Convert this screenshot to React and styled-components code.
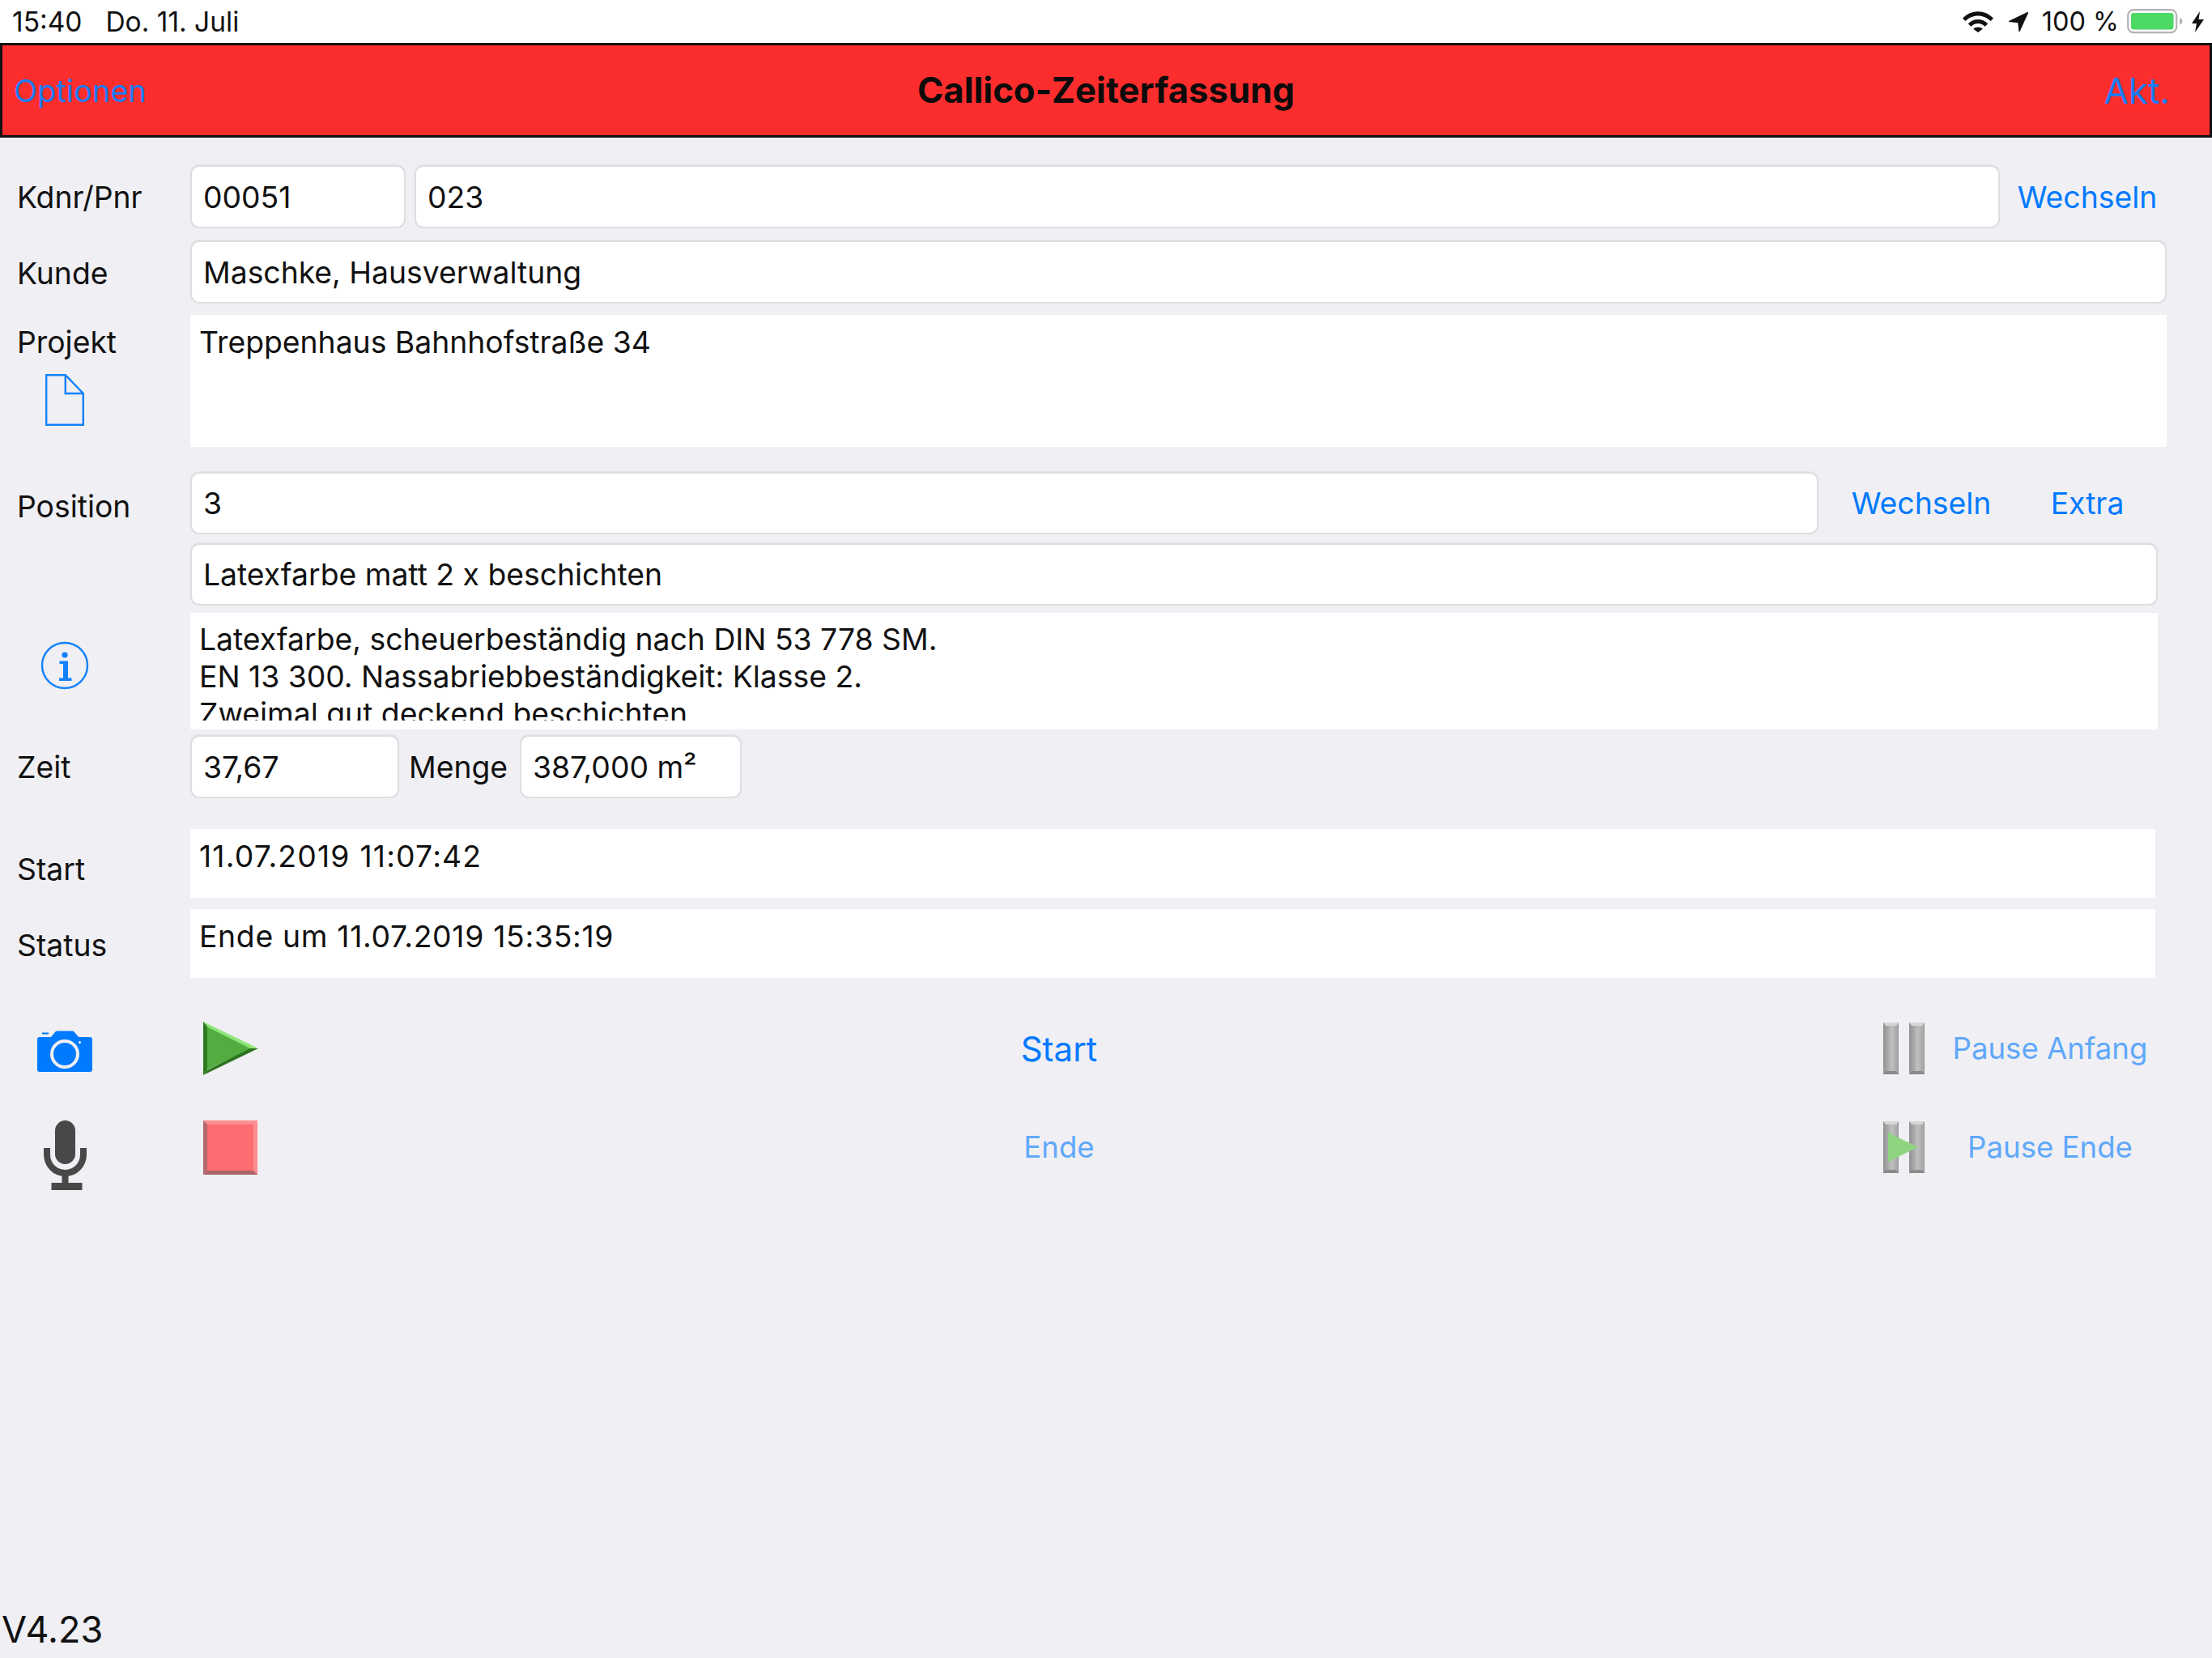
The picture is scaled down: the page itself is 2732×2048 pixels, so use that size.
import React from 'react';
import styled, { createGlobalStyle } from 'styled-components';

const GlobalStyle = createGlobalStyle`
  html, body {
    margin: 0;
    padding: 0;
    background: #efeff4;
  }
  * {
    box-sizing: border-box;
  }
`;

const Page = styled.div`
  width: 2732px;
  height: 2048px;
  display: flex;
  flex-direction: column;
  overflow: hidden;
  background: #efeff4;
  color: #111;
  font-family: Inter, "Liberation Sans", sans-serif;
  font-size: 37.3px;
`;

const StatusBar = styled.div`
  height: 53px;
  flex: none;
  background: #fff;
  display: flex;
  align-items: center;
  justify-content: space-between;
  padding: 0 10px 0 15px;
  font-size: 33.5px;
`;

const StatusGroup = styled.div`
  display: flex;
  align-items: center;
`;

const StatusItem = styled.div`
  display: flex;
  margin-left: ${(p) => p.$left || 0}px;
  font-size: ${(p) => (p.$size ? `${p.$size}px` : 'inherit')};
`;

const NavBar = styled.div`
  height: 117px;
  flex: none;
  background: #fc2d2d;
  border: 3px solid #111;
  display: grid;
  grid-template-columns: 1fr auto 1fr;
  align-items: center;
`;

const NavTitle = styled.div`
  font-size: 43.7px;
  font-weight: 700;
  color: #0b0b0b;
`;

const NavLink = styled.div`
  font-size: ${(p) => p.$size}px;
  color: #1a7cf7;
  text-align: ${(p) => p.$align || 'left'};
  padding: ${(p) => (p.$align === 'right' ? '0 49px 0 0' : '0 0 0 14px')};
`;

const Content = styled.div`
  flex: 1;
  display: flex;
  flex-direction: column;
  padding-top: 34px;
`;

const FormRow = styled.div`
  display: flex;
  align-items: ${(p) => p.$align || 'center'};
  height: ${(p) => p.$height || 78}px;
  margin-top: ${(p) => p.$top || 0}px;
`;

const Label = styled.div`
  width: 235px;
  flex: none;
  padding-left: 21px;
  padding-top: ${(p) => p.$shift || 0}px;
`;

const Field = styled.div`
  height: 100%;
  display: flex;
  align-items: center;
  flex: none;
  width: ${(p) => p.$width}px;
  margin-left: ${(p) => p.$left || 0}px;
  padding-left: 14px;
  background: #fff;
  border: 2px solid #dedee2;
  border-radius: 11px;
  box-shadow: 0 -1px 1px rgba(0, 0, 0, 0.05);
`;

const TextBox = styled.div`
  height: ${(p) => p.$height}px;
  width: ${(p) => p.$width}px;
  flex: none;
  padding: ${(p) => p.$pad ?? 11}px 0 0 11px;
  background: #fff;
  line-height: 46px;
  letter-spacing: ${(p) => p.$tracking || 0}px;
`;

const ClippedText = styled.div`
  height: ${(p) => p.$height}px;
  overflow: hidden;
`;

const SideColumn = styled.div`
  width: 235px;
  flex: none;
  display: flex;
  flex-direction: column;
  align-items: flex-start;
  height: 100%;
`;

const SideIcon = styled.div`
  width: 160px;
  display: flex;
  justify-content: center;
  margin-top: ${(p) => p.$top || 0}px;
`;

const LinkButton = styled.div`
  color: #007aff;
  width: ${(p) => p.$width}px;
  margin-left: ${(p) => p.$left || 0}px;
  flex: none;
  text-align: center;
`;

const Inline = styled.div`
  width: ${(p) => p.$width}px;
  margin-left: ${(p) => p.$left || 0}px;
  flex: none;
`;

const ActionRow = styled.div`
  display: grid;
  grid-template-columns: 160px 91px 68px 1978px 80px 310px;
  grid-template-rows: 70px;
  align-items: center;
  margin-top: ${(p) => p.$top}px;
`;

const IconCell = styled.div`
  display: flex;
  justify-content: center;
  align-self: start;
  margin-top: ${(p) => p.$top || 0}px;
`;

const GlossCell = styled.div`
  display: flex;
  justify-content: ${(p) => p.$justify || 'flex-start'};
`;

const ActionText = styled.div`
  text-align: center;
  color: #007aff;
  font-size: ${(p) => p.$size || 36.6}px;
  opacity: ${(p) => (p.$dim ? 0.6 : 1)};
`;

const Version = styled.div`
  margin-top: auto;
  padding: 0 0 7px 2px;
  font-size: 45px;
  line-height: 56px;
`;

const WifiIcon = () => (
  <svg width="38" height="26" viewBox="0 0 38 26">
    <path d="M0 8.5C10.5-2.6 27.5-2.6 38 8.5l-3.4 3.6C26 3.2 12 3.2 3.4 12.1z" fill="#111" />
    <path d="M6.8 15.3c6.9-7.2 17.5-7.2 24.4 0l-3.4 3.5c-5-5.1-12.6-5.1-17.6 0z" fill="#111" />
    <path d="M13.2 21.8c3.3-3.2 8.3-3.2 11.6 0L19 26z" fill="#111" />
  </svg>
);

const ArrowIcon = () => (
  <svg width="24" height="24" viewBox="0 0 24 24">
    <path d="M24 0L0 11.5l11.7 1.200L13 24z" fill="#111" stroke="#111" strokeWidth="1" strokeLinejoin="round" />
  </svg>
);

const BatteryIcon = () => (
  <svg width="69" height="32" viewBox="0 0 69 32">
    <rect x="1.200" y="1.200" width="60" height="28" rx="7" fill="#fff" stroke="#b4b4b4" strokeWidth="2.200" />
    <rect x="5" y="5" width="52.500" height="20.500" rx="3" fill="#4cd964" />
    <path d="M65 11c2.500.6 3.400 2.200 3.400 4.200s-.9 3.600-3.400 4.200z" fill="#b4b4b4" />
  </svg>
);

const BoltIcon = () => (
  <svg width="15" height="26" viewBox="0 0 15 26">
    <path d="M10 0L0 15h6L4 26l11-16H8.500z" fill="#111" />
  </svg>
);

const DocumentIcon = () => (
  <svg width="48" height="64" viewBox="0 0 48 64" fill="none" stroke="#1482fa" strokeWidth="2.400">
    <path d="M1.200 1.200h23.600L46.800 24v38.800H1.200z" />
    <path d="M24.800 1.200V24h22" />
  </svg>
);

const InfoIcon = () => (
  <svg width="60" height="60" viewBox="0 0 60 60">
    <circle cx="30" cy="30" r="28" fill="none" stroke="#1482fa" strokeWidth="2.400" />
    <circle cx="30" cy="17" r="3.600" fill="#1482fa" />
    <path d="M23.500 24.500h10.500v21h4.500v3.500h-15.500v-3.500h5v-17.500h-4.500z" fill="#1482fa" />
  </svg>
);

const CameraIcon = () => (
  <svg width="68" height="52" viewBox="0 0 68 52">
    <path
      fillRule="evenodd"
      fill="#007aff"
      d="M6 2.500h8v2h-8zM3 8h14l5-6c.8-1 2-1.500 3-1.500h18c1.300 0 2.300.5 3 1.500l5 6h14c2 0 3 1 3 3v37c0 2-1 3-3 3H3c-2 0-3-1-3-3V11c0-2 1-3 3-3zM34 11a18 18 0 1 0 0 36 18 18 0 0 0 0-36zM34 15a14 14 0 1 1 0 28 14 14 0 0 1 0-28zM52.500 13a1.600 1.600 0 1 0 0 3.200 1.600 1.600 0 0 0 0-3.200z"
    />
  </svg>
);

const MicIcon = () => (
  <svg width="53" height="86" viewBox="0 0 53 86">
    <rect x="14" y="0" width="25" height="54" rx="12.500" fill="#484848" />
    <path
      fill="none"
      stroke="#484848"
      strokeWidth="8"
      d="M4 34v8c0 13 10 23 22.500 23S49 55 49 42v-8"
    />
    <path d="M22.500 64h8v13h17v9H9.500v-9h13z" fill="#484848" />
  </svg>
);

const PlayIcon = () => (
  <svg width="68" height="66" viewBox="0 0 68 66">
    <path d="M0 0l68 33H0z" fill="#8fe678" />
    <path d="M0 0l5 6v54l-5 6z" fill="#2f7a20" />
    <path d="M0 66l68-33-12 0L5 60z" fill="#2d7420" />
    <path d="M5 6.500L58 33 5 59.500z" fill="#52ac40" />
  </svg>
);

const StopIcon = () => (
  <svg width="67" height="67" viewBox="0 0 67 67">
    <rect width="67" height="67" fill="#fd8e90" />
    <path d="M0 0l5 5v57l-5 5z" fill="#b4686b" />
    <path d="M0 67l5-5h57l5 5z" fill="#a86366" />
    <rect x="5" y="5" width="57" height="57" fill="#fc6c71" />
  </svg>
);

const PauseIcon = ({ withPlay }) => {
  const gradient = withPlay ? 'barB' : 'barA';
  return (
    <svg width="51" height="64" viewBox="0 0 51 64">
      <defs>
        <linearGradient id={gradient} x1="0" x2="1" y1="0" y2="0">
          <stop offset="0" stopColor="#8f8f8f" />
          <stop offset="0.55" stopColor="#c0c0c0" />
          <stop offset="1" stopColor="#a0a0a0" />
        </linearGradient>
      </defs>
      <rect width="19" height="64" fill={`url(#${gradient})`} />
      <rect x="32" width="19" height="64" fill={`url(#${gradient})`} />
      <path d="M0 0h19l-3 4H3zM32 0h19l-3 4H35z" fill="#d6d6d6" />
      <path d="M0 64h19l-3-4H3zM32 64h19l-3-4H35z" fill="#8a8a8a" />
      {withPlay && <path d="M6 14l37 18-37 18z" fill="#8fd581" />}
    </svg>
  );
};

const App = () => {
  return (
    <Page>
      <GlobalStyle />
      <StatusBar>
        <StatusGroup>
          <StatusItem>15:40</StatusItem>
          <StatusItem $left={29}>Do. 11. Juli</StatusItem>
        </StatusGroup>
        <StatusGroup>
          <WifiIcon />
          <StatusItem $left={19}><ArrowIcon /></StatusItem>
          <StatusItem $left={17} $size={32.5}>100 %</StatusItem>
          <StatusItem $left={10}><BatteryIcon /></StatusItem>
          <StatusItem $left={11}><BoltIcon /></StatusItem>
        </StatusGroup>
      </StatusBar>
      <NavBar>
        <NavLink $size={38}>Optionen</NavLink>
        <NavTitle>Callico-Zeiterfassung</NavTitle>
        <NavLink $size={44} $align="right">Akt.</NavLink>
      </NavBar>
      <Content>
        <FormRow>
          <Label>Kdnr/Pnr</Label>
          <Field $width={266}>00051</Field>
          <Field $width={1958} $left={11}>023</Field>
          <LinkButton $width={220} $left={-2}>Wechseln</LinkButton>
        </FormRow>
        <FormRow $top={15}>
          <Label $shift={3}>Kunde</Label>
          <Field $width={2441}>Maschke, Hausverwaltung</Field>
        </FormRow>
        <FormRow $top={14} $height={163} $align="flex-start">
          <SideColumn>
            <Label $shift={11}>Projekt</Label>
            <SideIcon $top={17}><DocumentIcon /></SideIcon>
          </SideColumn>
          <TextBox $width={2441} $height={163}>Treppenhaus Bahnhofstraße 34</TextBox>
        </FormRow>
        <FormRow $top={31} $height={77}>
          <Label $shift={8}>Position</Label>
          <Field $width={2011}>3</Field>
          <LinkButton $width={230} $left={12}>Wechseln</LinkButton>
          <LinkButton $width={120} $left={30}>Extra</LinkButton>
        </FormRow>
        <FormRow $top={11} $height={77}>
          <Inline $width={235} />
          <Field $width={2430}>Latexfarbe matt 2 x beschichten</Field>
        </FormRow>
        <FormRow $top={9} $height={144} $align="flex-start">
          <SideColumn>
            <SideIcon $top={35}><InfoIcon /></SideIcon>
          </SideColumn>
          <TextBox $width={2430} $height={144} $pad={10}>
            <ClippedText $height={123}>
              Latexfarbe, scheuerbeständig nach DIN 53 778 SM.
              <br />
              EN 13 300. Nassabriebbeständigkeit: Klasse 2.
              <br />
              Zweimal gut deckend beschichten.
            </ClippedText>
          </TextBox>
        </FormRow>
        <FormRow $top={7}>
          <Label>Zeit</Label>
          <Field $width={258}>37,67</Field>
          <Inline $width={118} $left={12}>Menge</Inline>
          <Field $width={274} $left={19}>387,000 m²</Field>
        </FormRow>
        <FormRow $top={38} $height={85}>
          <Label $shift={14}>Start</Label>
          <TextBox $width={2427} $height={85} $tracking={1.2}>11.07.2019 11:07:42</TextBox>
        </FormRow>
        <FormRow $top={14} $height={85}>
          <Label $shift={4}>Status</Label>
          <TextBox $width={2427} $height={85} $tracking={0.7}>Ende um 11.07.2019 15:35:19</TextBox>
        </FormRow>
        <ActionRow $top={52}>
          <IconCell $top={13}><CameraIcon /></IconCell>
          <div />
          <GlossCell><PlayIcon /></GlossCell>
          <ActionText $size={42}>Start</ActionText>
          <GlossCell $justify="flex-end"><PauseIcon /></GlossCell>
          <ActionText $dim>Pause Anfang</ActionText>
        </ActionRow>
        <ActionRow $top={52}>
          <IconCell $top={2}><MicIcon /></IconCell>
          <div />
          <GlossCell><StopIcon /></GlossCell>
          <ActionText $dim>Ende</ActionText>
          <GlossCell $justify="flex-end"><PauseIcon withPlay /></GlossCell>
          <ActionText $dim>Pause Ende</ActionText>
        </ActionRow>
        <Version>V4.23</Version>
      </Content>
    </Page>
  );
};

export default App;
